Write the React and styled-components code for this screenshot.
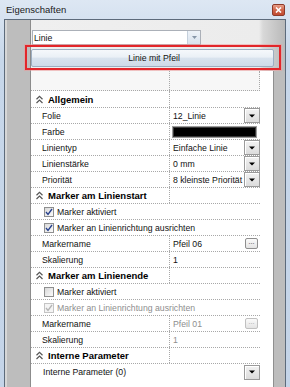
import React from 'react';
import styled, { createGlobalStyle } from 'styled-components';

const GlobalStyle = createGlobalStyle`
  html, body {
    margin: 0;
    padding: 0;
  }
  body {
    font-family: "Liberation Sans", Arial, sans-serif;
    background: #c9d8ea;
  }
  * {
    box-sizing: border-box;
  }
`;

const Window = styled.div`
  width: 290px;
  height: 387px;
  overflow: hidden;
  display: flex;
  flex-direction: column;
  background: linear-gradient(#dde7f3, #c7d7ea 60px, #c4d4e8);
`;

const TitleBar = styled.div`
  height: 19px;
  flex: none;
  display: flex;
  align-items: center;
  justify-content: space-between;
  padding: 0 5px 0 6px;
  font-size: 9.5px;
  color: #1b1b1b;
`;

const CloseButton = styled.div`
  width: 13px;
  height: 12px;
  margin-top: 1px;
  border-radius: 2px;
  border: 1px solid #8d3a2a;
  background: linear-gradient(#e9a08a, #d0654a 50%, #c04a30);
  display: flex;
  align-items: center;
  justify-content: center;
`;

const Client = styled.div`
  flex: 1;
  margin: 0 4px;
  border: 1px solid #5d6b7b;
  border-bottom: none;
  background: #bdbdbd;
  box-shadow: inset 2px 0 0 #d6d6d6;
  padding-left: 25px;
  display: flex;
  flex-direction: column;
`;

const Content = styled.div`
  flex: 1;
  display: flex;
  flex-direction: column;
  border-left: 1px solid #8c8c8c;
`;

const TopSection = styled.div`
  padding: 10px 0 1px 0;
  display: flex;
  flex-direction: column;
  background: linear-gradient(90deg, #efefef 0, #ececec 228px, #d8d8d8 232px, #b9b9b9 100%);
`;

const Combo = styled.div`
  margin-left: 1px;
  width: 169px;
  height: 15px;
  background: #fff;
  border: 1px solid #abb0b8;
  display: flex;
  align-items: center;
  justify-content: space-between;
  font-size: 8.7px;
  color: #111;
  padding-left: 1px;
`;

const ComboArrow = styled.div`
  width: 13px;
  height: 100%;
  border-left: 1px solid #c5d0dc;
  background: linear-gradient(#eef3f9, #d9e3ee);
  display: flex;
  align-items: center;
  justify-content: center;
`;

const Highlight = styled.div`
  margin-left: -6px;
  width: 256px;
  height: 25px;
  border: 2px solid #e2262a;
  box-shadow: 0 0 0 1px rgba(240, 150, 150, 0.5);
  padding: 2px 5px 1px 4px;
`;

const PrimaryButton = styled.div`
  height: 18px;
  border: 1px solid #9daec1;
  border-radius: 2px;
  background: linear-gradient(#f5f8fb 0%, #eaf0f6 45%, #d9e3ee 50%, #cfdbe8 100%);
  display: flex;
  align-items: center;
  justify-content: center;
  font-size: 8.7px;
  color: #111;
  padding-left: 3px;
`;

const GridPanel = styled.div`
  flex: 1;
  background: #fff;
  margin-right: 11px;
  border-right: 1px solid #8f8f8f;
`;

const Table = styled.div`
  width: 229px;
`;

const Row = styled.div`
  display: grid;
  grid-template-columns: 138px 1fr;
  height: ${p => p.$h || 16}px;
  border-bottom: 1px dotted #a8a8a8;
  background: ${p => p.$bg || '#fff'};
  font-size: 8.7px;
  color: #111;
  ${p => p.$edge && 'border-right: 1px dotted #a8a8a8;'}
`;

const LabelCell = styled.div`
  display: flex;
  align-items: center;
  padding-left: 11px;
  white-space: nowrap;
`;

const ValueCell = styled.div`
  display: flex;
  align-items: center;
  justify-content: space-between;
  border-left: 1px dotted #a8a8a8;
  padding-left: 3px;
  white-space: nowrap;
  color: ${p => (p.$disabled ? '#8e8e8e' : '#111')};
`;

const CategoryCell = styled.div`
  display: flex;
  align-items: center;
  gap: 4px;
  padding-left: 4px;
  white-space: nowrap;
  font-weight: bold;
  font-size: 9.5px;
  color: #000;
`;

const FullRow = styled.div`
  display: flex;
  align-items: center;
  justify-content: space-between;
  height: 16px;
  border-bottom: ${p => (p.$last ? 'none' : '1px dotted #a8a8a8')};
  padding-left: ${p => p.$indent}px;
  font-size: 8.7px;
  white-space: nowrap;
  color: ${p => (p.$disabled ? '#8e8e8e' : '#111')};
`;

const CheckLabel = styled.div`
  display: flex;
  align-items: center;
  gap: 3px;
`;

const Box = styled.span`
  width: 10px;
  height: 10px;
  border: 1px solid ${p => (p.$disabled ? '#c4c4c4' : '#8e8f8f')};
  background: ${p => (p.$disabled ? '#f4f4f4' : 'linear-gradient(135deg, #d9d9d9, #fbfbfb)')};
  display: flex;
  align-items: center;
  justify-content: center;
`;

const DropButton = styled.div`
  width: 16px;
  height: 15px;
  flex: none;
  border: 1px solid #9a9a9a;
  background: linear-gradient(#f2f2f2, #dcdcdc);
  box-shadow: inset 1px 1px 0 #fff;
  display: flex;
  align-items: center;
  justify-content: center;
`;

const DotsButton = styled.div`
  width: 13px;
  height: 11px;
  flex: none;
  margin-right: 2px;
  border: 1px solid ${p => (p.$disabled ? '#c0c0c0' : '#8e8e8e')};
  border-radius: 2px;
  background: linear-gradient(#fafafa, #e4e4e4);
  font-size: 7px;
  line-height: 6px;
  text-align: center;
  color: ${p => (p.$disabled ? '#a0a0a0' : '#333')};
`;

const Swatch = styled.div`
  margin-left: -1px;
  margin-right: 3px;
  flex: 1;
  height: 12px;
  border: 1px solid #9c9c9c;
  background: #000;
  box-shadow: inset 0 0 0 1px #3a3a3a;
`;

const Arrow = () => (
  <svg width="6" height="4" viewBox="0 0 6 4">
    <polygon points="0,0.5 6,0.5 3,3.5" fill="#000" />
  </svg>
);

const Chevrons = () => (
  <svg width="9" height="9" viewBox="0 0 9 9">
    <path d="M1.5 4.2 L4.5 1.3 L7.5 4.2 M1.5 8 L4.5 5.1 L7.5 8" fill="none" stroke="#555" strokeWidth="1.2" />
  </svg>
);

const Checkbox = ({ checked, disabled }) => (
  <Box $disabled={disabled}>
    {checked && (
      <svg width="8" height="8" viewBox="0 0 8 8">
        <path d="M1 4 L3 6.5 L7 1" fill="none" stroke={disabled ? '#b4b4b4' : '#26408c'} strokeWidth="1.3" />
      </svg>
    )}
  </Box>
);

const Category = ({ title }) => (
  <Row $h={title === 'Allgemein' ? 17 : 16}>
    <CategoryCell>
      <Chevrons />
      {title}
    </CategoryCell>
    <ValueCell />
  </Row>
);

const Prop = ({ label, value, control, disabled }) => (
  <Row>
    <LabelCell>{label}</LabelCell>
    <ValueCell $disabled={disabled}>
      {control === 'swatch' ? <Swatch /> : <span>{value}</span>}
      {control === 'drop' && <DropButton><Arrow /></DropButton>}
      {control === 'dots' && <DotsButton $disabled={disabled}>...</DotsButton>}
    </ValueCell>
  </Row>
);

const CheckRow = ({ label, checked, disabled }) => (
  <FullRow $indent={13} $disabled={disabled}>
    <CheckLabel>
      <Checkbox checked={checked} disabled={disabled} />
      {label}
    </CheckLabel>
  </FullRow>
);

const CloseIcon = () => (
  <svg width="7" height="6" viewBox="0 0 7 6">
    <path d="M1 0.5 L6 5.5 M6 0.5 L1 5.5" stroke="#fff" strokeWidth="1.6" />
  </svg>
);

const App = () => (
  <>
    <GlobalStyle />
    <Window>
      <TitleBar>
        <span>Eigenschaften</span>
        <CloseButton><CloseIcon /></CloseButton>
      </TitleBar>
      <Client>
        <Content>
          <TopSection>
            <Combo>
              <span>Linie</span>
              <ComboArrow>
                <svg width="5" height="3" viewBox="0 0 5 3">
                  <polygon points="0,0 5,0 2.5,3" fill="#8796a8" />
                </svg>
              </ComboArrow>
            </Combo>
            <Highlight>
              <PrimaryButton>Linie mit Pfeil</PrimaryButton>
            </Highlight>
          </TopSection>
          <GridPanel>
            <Table>
              <Row $h={20} $bg="#f7f7f7" $edge>
                <LabelCell />
                <ValueCell />
              </Row>
              <Category title="Allgemein" />
              <Prop label="Folie" value="12_Linie" control="drop" />
              <Prop label="Farbe" control="swatch" />
              <Prop label="Linientyp" value="Einfache Linie" control="drop" />
              <Prop label="Linienstärke" value="0 mm" control="drop" />
              <Prop label="Priorität" value="8 kleinste Priorität" control="drop" />
              <Category title="Marker am Linienstart" />
              <CheckRow label="Marker aktiviert" checked />
              <CheckRow label="Marker an Linienrichtung ausrichten" checked />
              <Prop label="Markername" value="Pfeil 06" control="dots" />
              <Prop label="Skalierung" value="1" />
              <Category title="Marker am Linienende" />
              <CheckRow label="Marker aktiviert" />
              <CheckRow label="Marker an Linienrichtung ausrichten" checked disabled />
              <Prop label="Markername" value="Pfeil 01" control="dots" disabled />
              <Prop label="Skalierung" value="1" disabled />
              <Category title="Interne Parameter" />
              <FullRow $indent={12} $last>
                <span>Interne Parameter (0)</span>
                <DropButton><Arrow /></DropButton>
              </FullRow>
            </Table>
          </GridPanel>
        </Content>
      </Client>
    </Window>
  </>
);

export default App;
